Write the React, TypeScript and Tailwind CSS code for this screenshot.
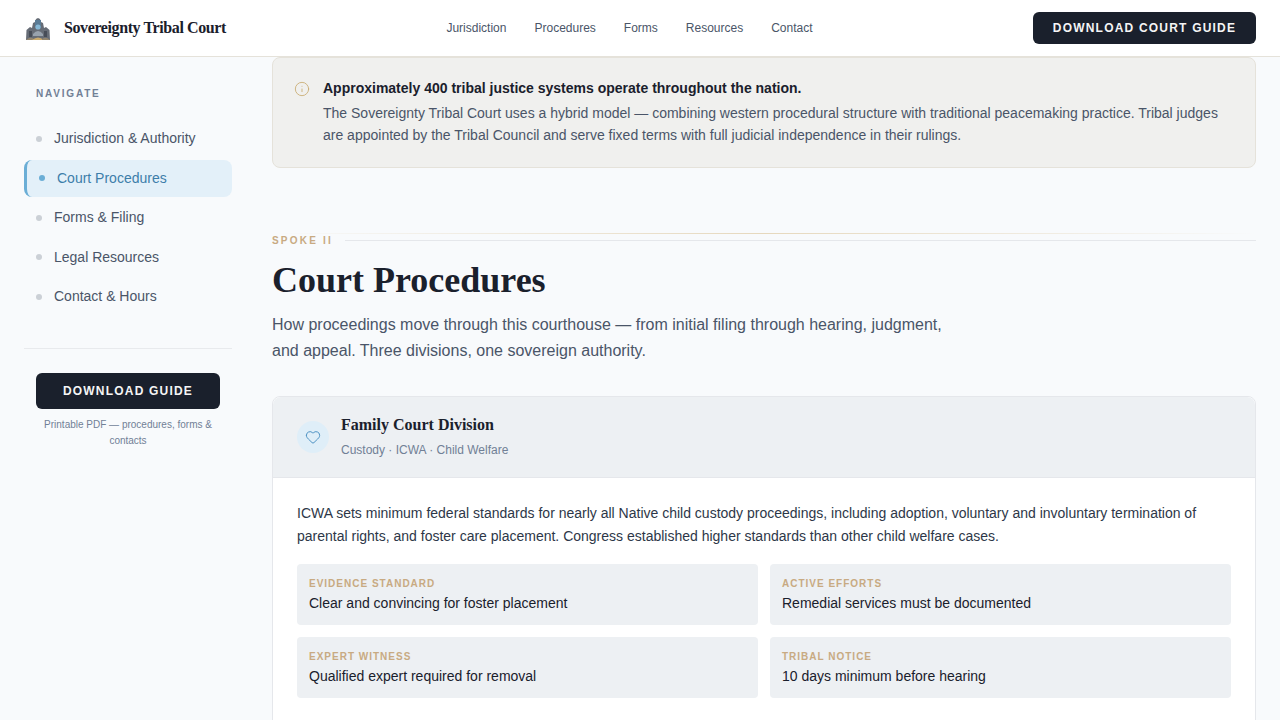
import React from "react";
import { Heart, Info } from "lucide-react";

const serif = "font-['Liberation_Serif',serif]";

function Logo() {
  return (
    <svg width="28" height="28" viewBox="0 0 28 28" className="shrink-0">
      <path d="M2 26 L2.5 16 L6 13 L8 14 L9 9 L11 8 L12 5 L14 4 L16 5 L17 8 L19 9 L20 14 L22 13 L25.5 16 L26 26 Z" fill="#666c76" />
      <rect x="11" y="6" width="6" height="8" fill="#5b7c96" />
      <circle cx="14" cy="13" r="2.6" fill="#86b8d6" />
      <rect x="5" y="17" width="3" height="6" fill="#474d58" />
      <rect x="20" y="17" width="3" height="6" fill="#474d58" />
      <path d="M9 20 Q14 14 19 20 L19 22 L9 22 Z" fill="#98a2ad" />
      <path d="M2 26 Q6 22 10 25 L10 26 Z" fill="#94866f" />
      <path d="M8 26 Q14 21 20 26 Z" fill="#cbab6e" />
      <path d="M18 25 Q22 22 26 26 L18 26 Z" fill="#94866f" />
    </svg>
  );
}

function SideItem({ label, active }: { label: string; active?: boolean }) {
  if (active) {
    return (
      <div className="flex h-[37px] items-center gap-3 rounded-lg border-l-[3px] border-[#6baed6] bg-[#e3f0f9] pl-3 text-[14px] text-[#3d7eaa]">
        <span className="h-1.5 w-1.5 rounded-full bg-[#6baed6]" />
        {label}
      </div>
    );
  }
  return (
    <div className="flex h-[37px] items-center gap-3 pl-3 text-[14px] text-[#4a5568]">
      <span className="h-1.5 w-1.5 rounded-full bg-[#cbd0d6]" />
      {label}
    </div>
  );
}

function Fact({ label, value }: { label: string; value: string }) {
  return (
    <div className="h-[61px] rounded bg-[#edf0f3] px-3 pt-[13px]">
      <div className="text-[10px] font-semibold leading-[14px] tracking-[1px] text-[#c8aa82]">{label}</div>
      <div className="mt-[2px] text-[14px] leading-[21px] text-[#1a202c]">{value}</div>
    </div>
  );
}

export default function App() {
  return (
    <div className="flex h-[720px] flex-col overflow-hidden bg-[#f8fafc] font-['Liberation_Sans',sans-serif]">
      <header className="flex h-[57px] shrink-0 items-center justify-between border-b border-[#e5e2da] bg-white px-6">
        <div className="flex items-center gap-3">
          <Logo />
          <span className={`${serif} text-[16px] font-bold tracking-[-0.4px] text-[#1a202c]`}>Sovereignty Tribal Court</span>
        </div>
        <nav className="flex items-center gap-7 text-[12px] text-[#4a5568]">
          <span>Jurisdiction</span>
          <span>Procedures</span>
          <span>Forms</span>
          <span>Resources</span>
          <span>Contact</span>
        </nav>
        <div className="flex h-8 w-[223px] items-center justify-center rounded-md bg-[#1a202c] text-[12px] font-semibold tracking-[1.2px] text-[#f5f5f5]">
          DOWNLOAD COURT GUIDE
        </div>
      </header>

      <div className="flex min-h-0 flex-1">
        <aside className="w-[256px] shrink-0 px-6 pt-[30px]">
          <div className="pl-3 text-[10px] font-semibold leading-[13px] tracking-[1.8px] text-[#718096]">NAVIGATE</div>
          <div className="mt-[20px] flex flex-col gap-[2.5px]">
            <SideItem label="Jurisdiction & Authority" />
            <SideItem label="Court Procedures" active />
            <SideItem label="Forms & Filing" />
            <SideItem label="Legal Resources" />
            <SideItem label="Contact & Hours" />
          </div>
          <div className="mt-[33px] border-t border-[#e8eaed] px-3 pt-6">
            <div className="flex h-9 items-center justify-center rounded-md bg-[#1a202c] text-[12px] font-semibold tracking-[1.2px] text-[#f5f5f5]">
              DOWNLOAD GUIDE
            </div>
            <p className="mt-2 text-center text-[10px] leading-4 text-[#718096]">
              Printable PDF — procedures, forms &amp; contacts
            </p>
          </div>
        </aside>

        <main className="min-w-0 flex-1 pl-4 pr-6">
          <div className="flex h-[111px] gap-[13px] rounded-lg border border-[#e5e2da] bg-[#f0f0ee] pl-[21px] pr-6 pt-5">
            <Info size={16} strokeWidth={1.25} className="mt-[3px] shrink-0 text-[#c8aa6e]" />
            <div>
              <div className="text-[14px] font-bold leading-[20px] text-[#1a202c]">
                Approximately 400 tribal justice systems operate throughout the nation.
              </div>
              <p className="mt-1 text-[14px] leading-[22px] text-[#4a5568]">
                The Sovereignty Tribal Court uses a hybrid model — combining western procedural structure with traditional peacemaking practice. Tribal judges are appointed by the Tribal Council and serve fixed terms with full judicial independence in their rulings.
              </p>
            </div>
          </div>

          <div className="mt-[65px] h-px bg-gradient-to-r from-transparent via-[#e6d8bd] to-transparent" />
          <div className="flex items-center gap-3">
            <span className="text-[10px] font-semibold leading-[13px] tracking-[2.2px] text-[#c8aa82]">SPOKE II</span>
            <div className="h-px flex-1 bg-[#e5e7eb]" />
          </div>
          <h2 className={`${serif} mt-[11px] text-[36px] font-bold leading-[44px] text-[#1a202c]`}>Court Procedures</h2>
          <p className="mt-[10px] max-w-[680px] text-[16px] leading-[26px] text-[#4a5568]">
            How proceedings move through this courthouse — from initial filing through hearing, judgment, and appeal. Three divisions, one sovereign authority.
          </p>

          <section className="mt-[32px] rounded-lg border border-[#e5e7eb] bg-white">
            <div className="flex h-[81px] items-center gap-3 rounded-t-lg border-b border-[#e5e7eb] bg-[#edf0f3] px-6">
              <div className="flex h-8 w-8 items-center justify-center rounded-full bg-[#dfeef8]">
                <Heart size={16} strokeWidth={1.5} className="text-[#4f93c4]" />
              </div>
              <div className="mb-[2px]">
                <div className={`${serif} text-[16px] font-bold leading-[24px] text-[#1a202c]`}>Family Court Division</div>
                <div className="mt-[3px] text-[12px] leading-[20px] text-[#718096]">Custody · ICWA · Child Welfare</div>
              </div>
            </div>
            <div className="px-6 pt-6">
              <p className="text-[14px] leading-[23px] text-[#2d3748]">
                ICWA sets minimum federal standards for nearly all Native child custody proceedings, including adoption, voluntary and involuntary termination of parental rights, and foster care placement. Congress established higher standards than other child welfare cases.
              </p>
              <div className="mt-[16px] grid grid-cols-2 gap-3">
                <Fact label="EVIDENCE STANDARD" value="Clear and convincing for foster placement" />
                <Fact label="ACTIVE EFFORTS" value="Remedial services must be documented" />
                <Fact label="EXPERT WITNESS" value="Qualified expert required for removal" />
                <Fact label="TRIBAL NOTICE" value="10 days minimum before hearing" />
              </div>
              <p className="mt-[17px] text-[14px] leading-[23px] text-[#2d3748]">
                Tribal court holds exclusive jurisdiction over custody matters for children who reside or are domiciled within the reservation boundaries.
              </p>
            </div>
          </section>
        </main>
      </div>
    </div>
  );
}
